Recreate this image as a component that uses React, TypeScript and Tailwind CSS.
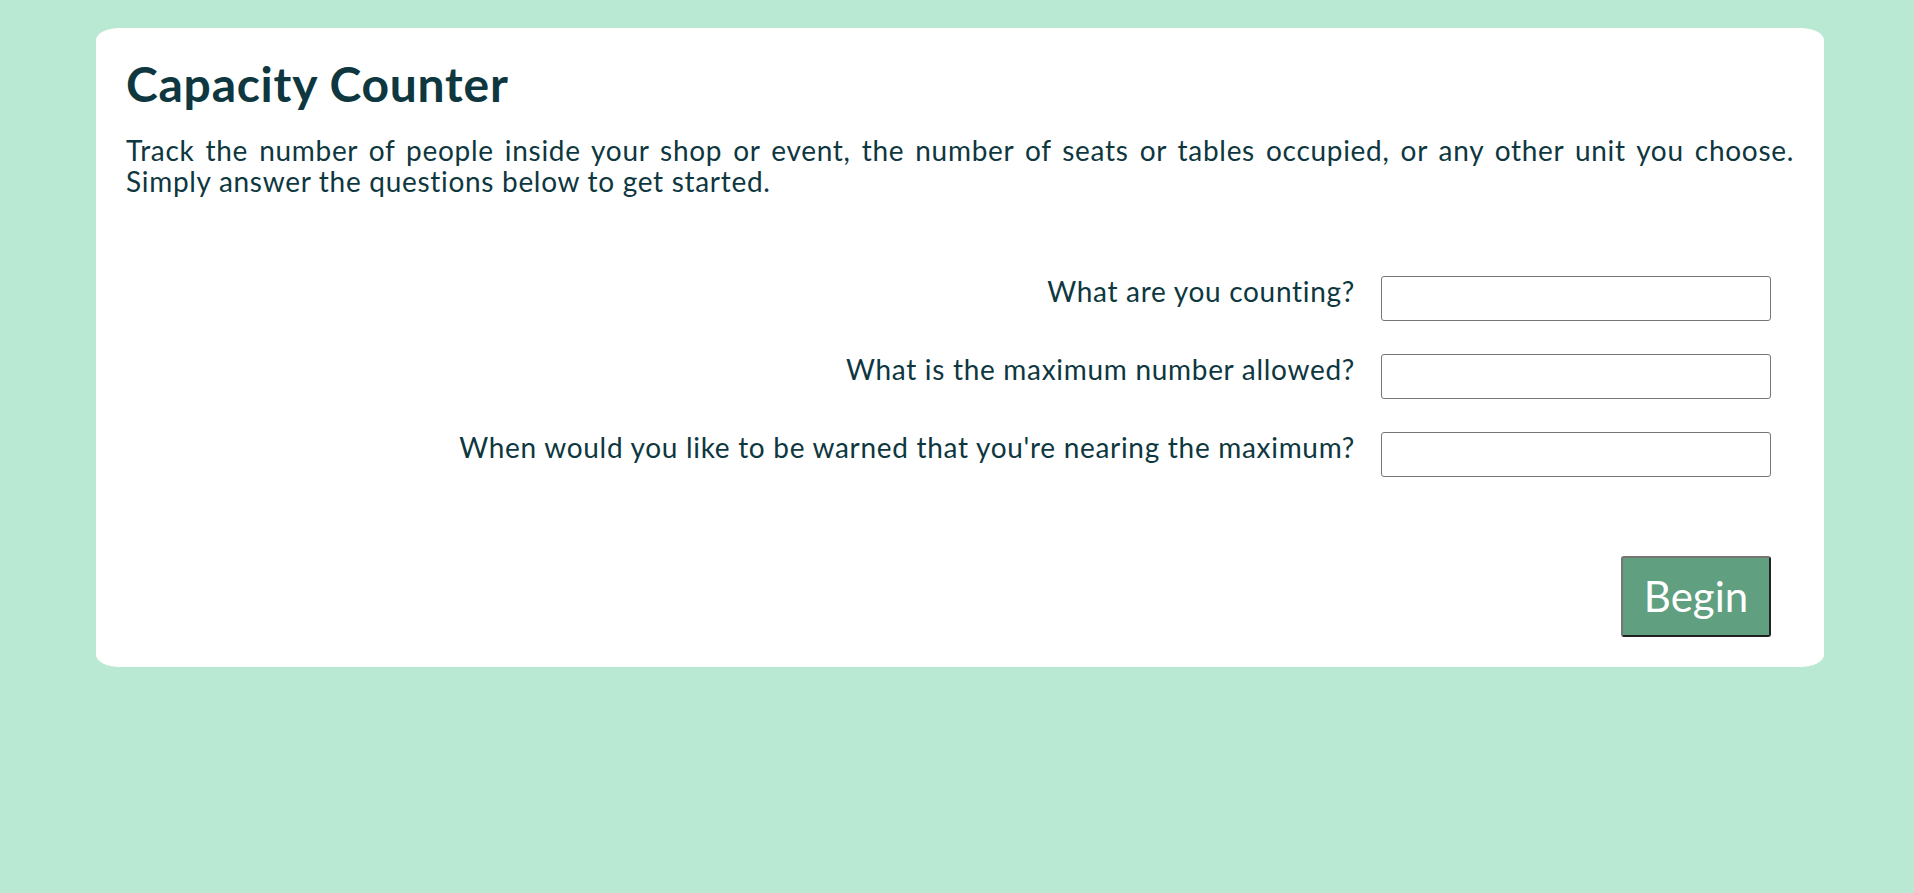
import { useState } from 'react';

const questions = [
  { id: 'unit', label: 'What are you counting?' },
  { id: 'max', label: 'What is the maximum number allowed?' },
  { id: 'warn', label: "When would you like to be warned that you're nearing the maximum?" },
];

export default function App() {
  const [values, setValues] = useState<Record<string, string>>({});

  return (
    <div className="min-h-screen bg-[#b9e9d2] pt-[28px] font-['Lato',sans-serif] text-[#0e3740]">
      <div className="ml-[96px] w-[1728px] rounded-[24px/12px] bg-white px-[30px] pt-[28px] pb-[30px]">
        {/* Header */}
        <h1 className="text-[48px] font-bold leading-[55px] tracking-[0.75px]">Capacity Counter</h1>
        <p className="mt-6 text-justify text-[28px] leading-[31px] tracking-[0.7px]">
          Track the number of people inside your shop or event, the number of seats or tables occupied, or any other
          unit you choose. Simply answer the questions below to get started.
        </p>

        {/* Setup form */}
        <div className="mt-[79px] flex flex-col gap-[33px] pr-[23px]">
          {questions.map((q) => (
            <div key={q.id} className="flex items-start justify-end gap-[26px]">
              <label htmlFor={q.id} className="text-right text-[28px] leading-[31px] tracking-[0.7px]">
                {q.label}
              </label>
              <input
                id={q.id}
                type="text"
                value={values[q.id] ?? ''}
                onChange={(e) => setValues({ ...values, [q.id]: e.target.value })}
                className="h-[45px] w-[390px] rounded-[3px] border border-[#767676] bg-white px-2 text-[24px] outline-none"
              />
            </div>
          ))}
        </div>

        <div className="mt-[79px] flex justify-end pr-[23px]">
          <button
            type="button"
            className="flex h-[81px] w-[150px] items-center justify-center rounded-[3px] border-2 border-t-[#767676] border-l-[#767676] border-r-[#222] border-b-[#222] bg-[#609f80] text-[42px] text-white"
          >
            Begin
          </button>
        </div>
      </div>
    </div>
  );
}
